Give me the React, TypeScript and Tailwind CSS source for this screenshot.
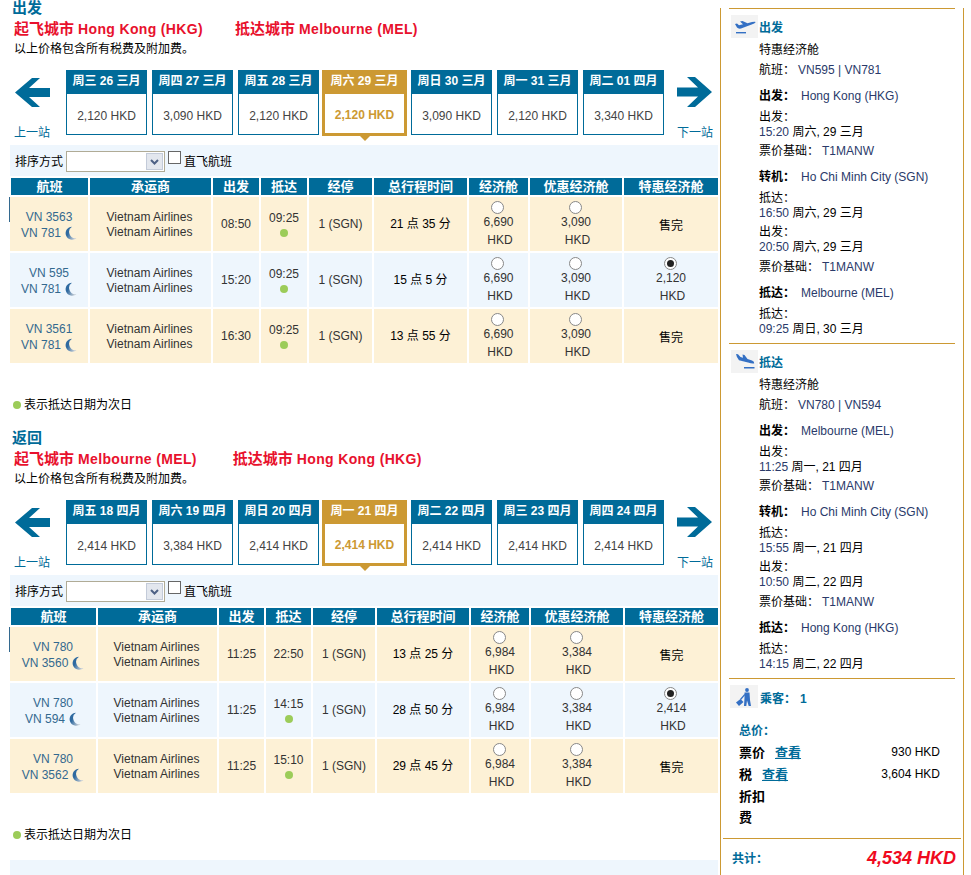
import React from 'react';

type Fare = { price: string; checked?: boolean } | null;

type Flight = {
  codes: [string, string];
  depart: string;
  arrive: string;
  nextDay: boolean;
  stop: string;
  duration: string;
  fares: [Fare, Fare, Fare];
};

type Day = { label: string; price: string; active?: boolean };

const font = { fontFamily: '"Liberation Sans", "Noto Sans CJK SC", sans-serif' };

const outDays: Day[] = [
  { label: '周三 26 三月', price: '2,120 HKD' },
  { label: '周四 27 三月', price: '3,090 HKD' },
  { label: '周五 28 三月', price: '2,120 HKD' },
  { label: '周六 29 三月', price: '2,120 HKD', active: true },
  { label: '周日 30 三月', price: '3,090 HKD' },
  { label: '周一 31 三月', price: '2,120 HKD' },
  { label: '周二 01 四月', price: '3,340 HKD' },
];

const backDays: Day[] = [
  { label: '周五 18 四月', price: '2,414 HKD' },
  { label: '周六 19 四月', price: '3,384 HKD' },
  { label: '周日 20 四月', price: '2,414 HKD' },
  { label: '周一 21 四月', price: '2,414 HKD', active: true },
  { label: '周二 22 四月', price: '2,414 HKD' },
  { label: '周三 23 四月', price: '2,414 HKD' },
  { label: '周四 24 四月', price: '2,414 HKD' },
];

const outFlights: Flight[] = [
  {
    codes: ['VN 3563', 'VN 781'],
    depart: '08:50',
    arrive: '09:25',
    nextDay: true,
    stop: '1 (SGN)',
    duration: '21 点 35 分',
    fares: [{ price: '6,690' }, { price: '3,090' }, null],
  },
  {
    codes: ['VN 595', 'VN 781'],
    depart: '15:20',
    arrive: '09:25',
    nextDay: true,
    stop: '1 (SGN)',
    duration: '15 点 5 分',
    fares: [{ price: '6,690' }, { price: '3,090' }, { price: '2,120', checked: true }],
  },
  {
    codes: ['VN 3561', 'VN 781'],
    depart: '16:30',
    arrive: '09:25',
    nextDay: true,
    stop: '1 (SGN)',
    duration: '13 点 55 分',
    fares: [{ price: '6,690' }, { price: '3,090' }, null],
  },
];

const backFlights: Flight[] = [
  {
    codes: ['VN 780', 'VN 3560'],
    depart: '11:25',
    arrive: '22:50',
    nextDay: false,
    stop: '1 (SGN)',
    duration: '13 点 25 分',
    fares: [{ price: '6,984' }, { price: '3,384' }, null],
  },
  {
    codes: ['VN 780', 'VN 594'],
    depart: '11:25',
    arrive: '14:15',
    nextDay: true,
    stop: '1 (SGN)',
    duration: '28 点 50 分',
    fares: [{ price: '6,984' }, { price: '3,384' }, { price: '2,414', checked: true }],
  },
  {
    codes: ['VN 780', 'VN 3562'],
    depart: '11:25',
    arrive: '15:10',
    nextDay: true,
    stop: '1 (SGN)',
    duration: '29 点 45 分',
    fares: [{ price: '6,984' }, { price: '3,384' }, null],
  },
];

const headers = ['航班', '承运商', '出发', '抵达', '经停', '总行程时间', '经济舱', '优惠经济舱', '特惠经济舱'];

function ArrowLeft() {
  return (
    <svg width="35" height="29" viewBox="0 0 35 29">
      <path d="M0 14.5 L17 0 H25 L14 10 H35 V19 H14 L25 29 H17 Z" fill="#006b99" />
    </svg>
  );
}

function ArrowRight() {
  return (
    <svg width="35" height="30" viewBox="0 0 35 30">
      <path d="M35 15 L18 0 H10 L21 10.5 H0 V19.5 H21 L10 30 H18 Z" fill="#006b99" />
    </svg>
  );
}

function Moon({ id }: { id: string }) {
  return (
    <svg width="13" height="14" viewBox="0 0 13 14" className="ml-[3px]">
      <defs>
        <linearGradient id={id} x1="0" y1="0" x2="1" y2="0.6">
          <stop offset="0.4" stopColor="#2f6aa0" />
          <stop offset="1" stopColor="#c3ccd6" />
        </linearGradient>
      </defs>
      <path d="M8 0.7 A6.5 6.5 0 1 0 12.5 12 A6.2 6.2 0 0 1 8 0.7 Z" fill={`url(#${id})`} />
    </svg>
  );
}

function DayCard({ day }: { day: Day }) {
  if (day.active) {
    return (
      <div className="relative ml-[-2px] mr-[-1px] w-[85px] h-[66px] border-[3px] border-t-0 border-[#cc9933] bg-white">
        <div className="-mx-[3px] h-[24px] bg-[#cc9933] text-white font-bold text-[12px] leading-[23px] text-center">
          {day.label}
        </div>
        <div className="text-[#cc9933] font-bold text-[12px] text-center mt-[14px] leading-[15px]">{day.price}</div>
        <div className="absolute left-1/2 -translate-x-1/2 -bottom-[8px] w-0 h-0 border-x-[8px] border-x-transparent border-t-[8px] border-t-[#cc9933]" />
      </div>
    );
  }
  return (
    <div className="w-[81px] h-[65px] border border-[#006b99] bg-white">
      <div className="-mx-px -mt-px h-[24px] bg-[#006b99] text-white font-bold text-[12px] leading-[23px] text-center">
        {day.label}
      </div>
      <div className="text-[#444] text-[12px] text-center mt-[15px] leading-[15px]">{day.price}</div>
    </div>
  );
}

function DateStrip({ days }: { days: Day[] }) {
  return (
    <div className="flex mt-[13px] h-[66px]">
      <div className="w-[56px] pl-[5px] pt-[8px] relative">
        <ArrowLeft />
        <a className="absolute left-[4px] top-[56px] text-[12px] leading-[15px] text-[#006b99]">上一站</a>
      </div>
      <div className="flex gap-[5px]">
        {days.map(day => (
          <DayCard key={day.label} day={day} />
        ))}
      </div>
      <div className="ml-[13px] w-[36px] pt-[7px] relative">
        <ArrowRight />
        <a className="absolute left-0 top-[56px] text-[12px] leading-[15px] text-[#006b99] whitespace-nowrap">下一站</a>
      </div>
    </div>
  );
}

function SortBar() {
  return (
    <div className="mt-[9px] h-[31px] bg-[#eef6fd] flex items-start pl-[5px] text-[12px] text-black">
      <span className="mt-[10px] leading-[15px] w-[51px]">排序方式</span>
      <div className="mt-[6px] w-[99px] h-[21px] border border-[#b0ab96] bg-white flex justify-end items-center pr-px">
        <div className="w-[17px] h-[17px] bg-[#e3e7ee] border border-[#c3cbd9] flex items-center justify-center">
          <svg width="9" height="6" viewBox="0 0 9 6">
            <path d="M1 1 L4.5 4.5 L8 1" fill="none" stroke="#4d6185" strokeWidth="2" />
          </svg>
        </div>
      </div>
      <span className="mt-[6px] ml-[3px] w-[13px] h-[13px] border border-[#666] bg-white" />
      <span className="mt-[10px] ml-[3px] leading-[15px]">直飞航班</span>
    </div>
  );
}

function Radio({ checked }: { checked?: boolean }) {
  return (
    <span className="-ml-[2px] w-[13px] h-[13px] rounded-full border border-[#888] bg-white flex items-center justify-center">
      {checked && <span className="w-[7px] h-[7px] rounded-full bg-[#222]" />}
    </span>
  );
}

function FareCell({ fare, bg }: { fare: Fare; bg: string }) {
  if (!fare) {
    return <div className={`${bg} flex items-center justify-center pt-[4px] text-[12px] text-black`}>售完</div>;
  }
  return (
    <div className={`${bg} flex flex-col items-center pt-[4px] text-[12px] text-[#333]`}>
      <Radio checked={fare.checked} />
      <div className="leading-[15px] mt-[1px]">{fare.price}</div>
      <div className="leading-[15px] mt-[3px] pl-[3px]">HKD</div>
    </div>
  );
}

function FlightTable({ flights, cols, name }: { flights: Flight[]; cols: string; name: string }) {
  return (
    <div className={`grid gap-[2px] mt-[2px] ${cols}`}>
      {headers.map((h, i) => (
        <div
          key={h}
          className={`bg-[#006b99] text-white font-bold text-[13px] h-[17px] leading-[17px] text-center ${
            i === 0 ? 'ml-px' : ''
          }`}
        >
          {h}
        </div>
      ))}
      {flights.map((f, idx) => {
        const bg = idx % 2 === 0 ? 'bg-[#fdf1d6]' : 'bg-[#eef6fd]';
        const cell = `${bg} h-[54px] flex items-center justify-center text-[12px] text-[#333]`;
        return (
          <React.Fragment key={f.codes.join()}>
            <div className={`${bg} h-[54px] relative flex flex-col justify-center items-center pt-[2px] text-[12px] leading-[16px] text-[#33698f]`}>
              {idx === 0 && <span className="absolute -left-px top-0 w-px h-[25px] bg-[#33698f]" />}
              <div>{f.codes[0]}</div>
              <div className="flex items-center">
                {f.codes[1]}
                <Moon id={`${name}-moon-${idx}`} />
              </div>
            </div>
            <div className={`${bg} flex flex-col items-center justify-center pt-[2px] text-[12px] leading-[15px] text-[#333]`}>
              <div className="-ml-[2px]">Vietnam Airlines</div>
              <div className="-ml-[2px]">Vietnam Airlines</div>
            </div>
            <div className={cell}>{f.depart}</div>
            <div className={`${cell} flex-col`}>
              <div className={f.nextDay ? 'leading-[15px]' : ''}>{f.arrive}</div>
              {f.nextDay && <span className="mt-[3px] w-[8px] h-[8px] rounded-full bg-[#9ccc59]" />}
            </div>
            <div className={cell}>{f.stop}</div>
            <div className={`${cell} text-black`}>{f.duration}</div>
            {f.fares.map((fare, i) => (
              <FareCell key={i} fare={fare} bg={bg} />
            ))}
          </React.Fragment>
        );
      })}
    </div>
  );
}

function Legend() {
  return (
    <div className="mt-[34px] h-[15px] flex items-center pl-[3px] text-[12px] text-black">
      <span className="w-[8px] h-[8px] rounded-full bg-[#9ccc59] mr-[3px]" />
      表示抵达日期为次日
    </div>
  );
}

function City({ label, name }: { label: string; name: string }) {
  return (
    <span className="whitespace-nowrap">
      <span className="text-[15px]">{label}</span>
      <span className="ml-[4px] tracking-[0.35px]">{name}</span>
    </span>
  );
}

function Direction(props: {
  title: string;
  from: string;
  to: string;
  gap: string;
  days: Day[];
  flights: Flight[];
  cols: string;
  name: string;
}) {
  return (
    <section>
      <h2 className="text-[15px] font-bold leading-[15px] text-[#006b99] pl-[2px]">{props.title}</h2>
      <div className={`mt-[6px] pl-[4px] flex ${props.gap} text-[14px] font-bold leading-[16px] text-[#e8112d]`}>
        <City label="起飞城市" name={props.from} />
        <City label="抵达城市" name={props.to} />
      </div>
      <p className="mt-[5px] pl-[4px] text-[12px] leading-[15px] text-black">以上价格包含所有税费及附加费。</p>
      <DateStrip days={props.days} />
      <SortBar />
      <FlightTable flights={props.flights} cols={props.cols} name={props.name} />
      <Legend />
    </section>
  );
}

function TakeoffIcon() {
  return (
    <svg width="21" height="13" viewBox="0 0 21 13" className="ml-[1px] mt-[1px]">
      <path d="M0 3 L2 2.6 L4 4.2 L8 3.2 L5 0.6 L7.5 0 L12.5 2.3 L17 1 Q20 0.3 20.8 1 Q20 2.4 16 3.8 L6 7.6 Q3 8 2 6.6 Z" fill="#3470c4" />
      <rect x="1" y="11" width="10" height="1.4" fill="#3470c4" />
    </svg>
  );
}

function LandingIcon() {
  return (
    <svg width="19" height="15" viewBox="0 0 19 15" className="ml-[2px]">
      <path d="M0 0 L2 0.3 L4.5 3 L7 3.8 L6.5 0.5 L8.5 1 L11.5 5 L16 6.5 Q18.6 7.6 18.2 9.4 Q16 9.8 12 8.6 L3 6.2 Q0.6 3.6 0 0 Z" fill="#3470c4" />
      <rect x="8" y="13" width="10.5" height="1.5" fill="#3470c4" />
    </svg>
  );
}

function PassengerIcon() {
  return (
    <svg width="16" height="18" viewBox="0 0 16 18">
      <circle cx="11" cy="2" r="1.9" fill="#3470c4" />
      <path d="M8.5 4.6 H13.5 L14 12 L15 18 H12.7 L11 12.5 L10.3 18 H8 L8.5 10 Z" fill="#3470c4" />
      <path d="M0 14.5 L4.5 11 L7.5 14 L3 18 Z" fill="#3470c4" />
      <path d="M4.5 11.5 L8.8 6.5" stroke="#3470c4" strokeWidth="1.2" />
    </svg>
  );
}

function Info({ children }: { children: React.ReactNode }) {
  return <span className="text-[#2a3a6a]">{children}</span>;
}

function Stamp({ value }: { value: string }) {
  const [time, ...rest] = value.split(' ');
  return (
    <div>
      <Info>{time}</Info> {rest.join(' ')}
    </div>
  );
}

function SideLeg(props: {
  icon: React.ReactNode;
  title: string;
  flightNo: string;
  from: string;
  depart: string;
  via: string;
  viaArrive: string;
  viaDepart: string;
  to: string;
  arrive: string;
}) {
  return (
    <div className="pl-[10px] pb-[6px] text-[12px] leading-[15px] text-black">
      <div className="mt-[6px] h-[23px] flex">
        <div className="w-[27px] h-[23px] bg-[#f3f3f3] flex items-center justify-center">{props.icon}</div>
        <span className="ml-[1px] leading-[26px] font-bold text-[#006b99]">{props.title}</span>
      </div>
      <div className="pl-[28px]">
        <div className="mt-[5px]">特惠经济舱</div>
        <div className="mt-[5px]">
          航班：<span className="ml-[3px]"><Info>{props.flightNo}</Info></span>
        </div>
        <div className="mt-[11px]">
          <b>出发：</b>
          <span className="ml-[6px]"><Info>{props.from}</Info></span>
        </div>
        <div className="mt-[6px]">出发：</div>
        <Stamp value={props.depart} />
        <div className="mt-[4px]">票价基础：<span className="ml-[3px]"><Info>T1MANW</Info></span></div>
        <div className="mt-[11px]">
          <b>转机：</b>
          <span className="ml-[6px]"><Info>{props.via}</Info></span>
        </div>
        <div className="mt-[6px]">抵达：</div>
        <Stamp value={props.viaArrive} />
        <div className="mt-[4px]">出发：</div>
        <Stamp value={props.viaDepart} />
        <div className="mt-[5px]">票价基础：<span className="ml-[3px]"><Info>T1MANW</Info></span></div>
        <div className="mt-[11px]">
          <b>抵达：</b>
          <span className="ml-[6px]"><Info>{props.to}</Info></span>
        </div>
        <div className="mt-[6px]">抵达：</div>
        <Stamp value={props.arrive} />
      </div>
    </div>
  );
}

function Sidebar() {
  return (
    <aside className="w-[244px] h-[875px] border-x border-[#cc9933] text-[12px]">
      <div className="mt-[8px] mx-[8px] border-t border-[#cc9933]" />
      <SideLeg
        icon={<TakeoffIcon />}
        title="出发"
        flightNo="VN595 | VN781"
        from="Hong Kong (HKG)"
        depart="15:20 周六, 29 三月"
        via="Ho Chi Minh City (SGN)"
        viaArrive="16:50 周六, 29 三月"
        viaDepart="20:50 周六, 29 三月"
        to="Melbourne (MEL)"
        arrive="09:25 周日, 30 三月"
      />
      <div className="mx-[8px] border-t border-[#cc9933]" />
      <SideLeg
        icon={<LandingIcon />}
        title="抵达"
        flightNo="VN780 | VN594"
        from="Melbourne (MEL)"
        depart="11:25 周一, 21 四月"
        via="Ho Chi Minh City (SGN)"
        viaArrive="15:55 周一, 21 四月"
        viaDepart="10:50 周二, 22 四月"
        to="Hong Kong (HKG)"
        arrive="14:15 周二, 22 四月"
      />
      <div className="mx-[8px] border-t border-[#cc9933]" />
      <div className="mt-[6px] ml-[9px] h-[23px] flex font-bold text-[#006b99]">
        <div className="w-[28px] h-[23px] bg-[#f3f3f3] flex items-center justify-center">
          <PassengerIcon />
        </div>
        <span className="ml-[2px] leading-[28px]">乘客：</span>
        <span className="ml-[4px] leading-[28px]">1</span>
      </div>
      <div className="pl-[18px] pr-[23px] mt-[16px] font-bold leading-[15px]">
        <div className="text-[#006b99]">总价：</div>
        <div className="mt-[6px] h-[22px] flex justify-between text-black">
          <span className="text-[13px]">
            票价<a className="ml-[10px] text-[#006b99] underline">查看</a>
          </span>
          <span className="font-normal">930 HKD</span>
        </div>
        <div className="h-[22px] flex justify-between text-black">
          <span className="text-[13px]">
            税<a className="ml-[10px] text-[#006b99] underline">查看</a>
          </span>
          <span className="font-normal">3,604 HKD</span>
        </div>
        <div className="h-[21px] text-black text-[13px]">折扣</div>
        <div className="h-[21px] text-black text-[13px]">费</div>
      </div>
      <div className="mt-[7px] mx-[2px] border-t border-[#cc9933]" />
      <div className="flex justify-between items-center pl-[11px] pr-[7px] mt-[8px]">
        <span className="font-bold text-[#006b99] mt-[3px]">共计：</span>
        <span className="text-[18px] font-bold italic text-[#f00a1e] leading-[20px]">4,534 HKD</span>
      </div>
    </aside>
  );
}

export default function App() {
  return (
    <div className="h-[875px] w-[971px] bg-white overflow-hidden flex" style={font}>
      <main className="ml-[10px] w-[708px]">
        <Direction
          title="出发"
          from="Hong Kong (HKG)"
          to="Melbourne (MEL)"
          gap="gap-[32px]"
          days={outDays}
          flights={outFlights}
          cols="grid-cols-[78px_121px_46px_46px_63px_93px_59px_92px_94px]"
          name="out"
        />
        <div className="h-[18px]" />
        <Direction
          title="返回"
          from="Melbourne (MEL)"
          to="Hong Kong (HKG)"
          gap="gap-[36px]"
          days={backDays}
          flights={backFlights}
          cols="grid-cols-[86px_119px_45px_45px_62px_92px_58px_92px_93px]"
          name="back"
        />
        <div className="mt-[18px] h-[20px] bg-[#eef6fd]" />
      </main>
      <div className="ml-[2px]">
        <Sidebar />
      </div>
    </div>
  );
}
